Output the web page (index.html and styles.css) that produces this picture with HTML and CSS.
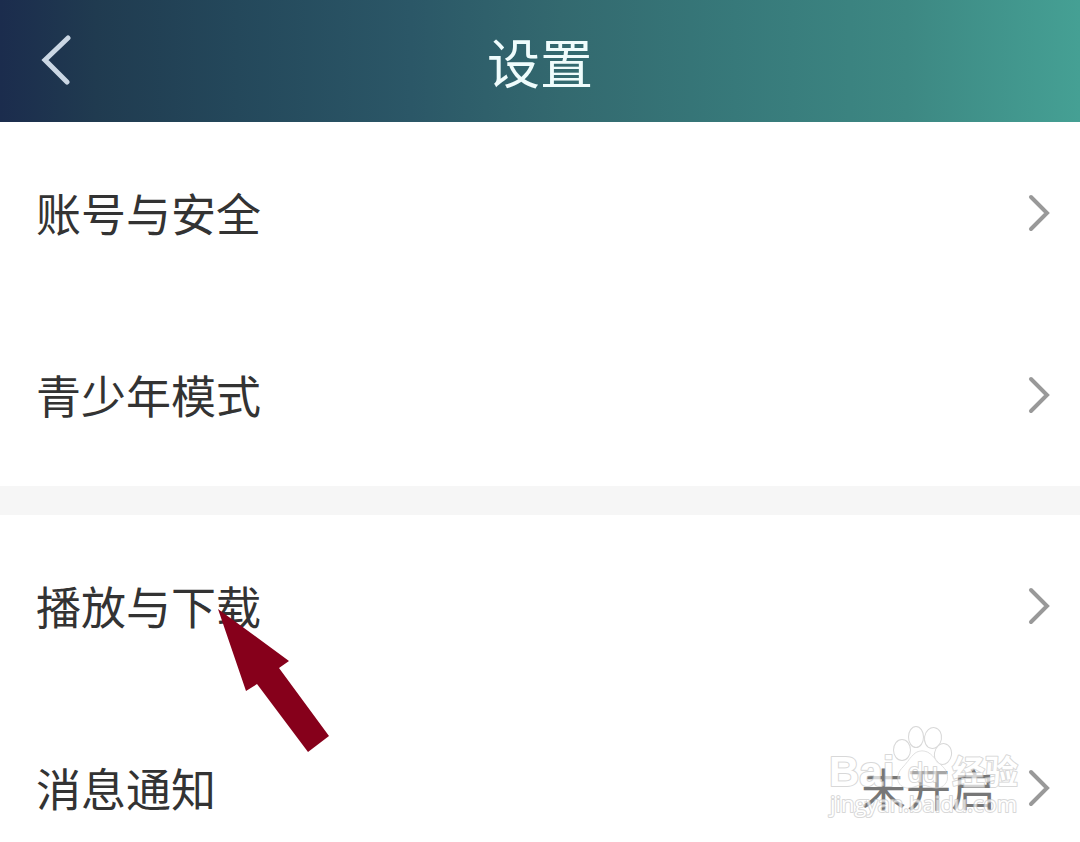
FILE: index.html
```html
<!DOCTYPE html>
<html lang="zh-CN">
<head>
    <meta charset="utf-8">
    <meta name="viewport" content="width=device-width, initial-scale=1">
    <title>设置</title>
    <link rel="stylesheet" href="styles.css">
</head>
<body>
    <header class="header">
        <button class="back-btn" type="button" aria-label="返回">
            <svg width="32" height="52" viewBox="0 0 32 52"><path d="M28 3L5 25L27 47"/></svg>
        </button>
        <h1 class="title">设置</h1>
    </header>
    <main class="settings">
        <nav class="group">
            <a class="row" href="#account">
                <span class="row-label">账号与安全</span>
                <svg class="chevron" width="24" height="38" viewBox="0 0 24 38"><path d="M3 3L19 19L3 35"/></svg>
            </a>
            <a class="row" href="#teen">
                <span class="row-label">青少年模式</span>
                <svg class="chevron" width="24" height="38" viewBox="0 0 24 38"><path d="M3 3L19 19L3 35"/></svg>
            </a>
        </nav>
        <nav class="group">
            <a class="row" href="#playback">
                <span class="row-label">播放与下载</span>
                <svg class="chevron" width="24" height="38" viewBox="0 0 24 38"><path d="M3 3L19 19L3 35"/></svg>
                <svg class="pointer" width="112" height="144" viewBox="0 0 112 144"><path d="M0 0L71 52L61 59L111 127L90 143L39 75L28 82Z"/></svg>
            </a>
            <a class="row" href="#notice">
                <span class="row-label">消息通知</span>
                <span class="row-value">未开启</span>
                <svg class="chevron" width="24" height="38" viewBox="0 0 24 38"><path d="M3 3L19 19L3 35"/></svg>
                <svg class="watermark" width="200" height="100" viewBox="0 0 200 100">
                    <!-- paw -->
                    <ellipse cx="76" cy="30" rx="8" ry="10"/>
                    <ellipse cx="90" cy="17" rx="7" ry="10"/>
                    <ellipse cx="107" cy="18" rx="8" ry="10" transform="rotate(10 107 18)"/>
                    <ellipse cx="117" cy="34" rx="8" ry="10" transform="rotate(10 117 34)"/>
                    <path class="wm-pad" d="M96 31C105 31 108 39 115 45C126 54 122 68 110 68C104 68 102 65 96 65C90 65 88 68 82 68C70 67 69 55 77 47C84 40 87 31 96 31Z"/>
                    <text class="wm-brand" x="3" y="66">Bai</text>
                    <text class="wm-du" x="82" y="62">du</text>
                    <text class="wm-name" x="126" y="64">经验</text>
                    <text class="wm-url" x="4" y="92">jingyan.baidu.com</text>
                </svg>
            </a>
        </nav>
    </main>
</body>
</html>
```
FILE: styles.css
```css
* {
    box-sizing: border-box;
}
body {
    margin: 0;
    height: 100vh;
    overflow: hidden;
    display: flex;
    flex-direction: column;
    background: #fff;
    color: #333;
    font-family: "Noto Sans CJK SC", sans-serif;
}
.header {
    flex: none;
    display: grid;
    grid-template-columns: 80px 1fr 80px;
    align-items: center;
    height: 122px;
    padding: 0 16px;
    background: linear-gradient(90deg, #1b2c4d 0%, #203b50 9%, #24485b 22%, #2b5767 38%, #33696f 52%, #37797a 68%, #3d8883 84%, #45a094 100%);
}
.back-btn {
    justify-self: start;
    display: flex;
    padding: 0 24px;
    border: none;
    background: none;
    cursor: pointer;
}
.back-btn path {
    fill: none;
    stroke: #cbd7e4;
    stroke-width: 5;
    stroke-linecap: round;
}
.title {
    margin: 0;
    text-align: center;
    font-size: 53px;
    line-height: 80px;
    font-weight: 400;
    color: #effcfc;
}
.settings {
    flex: 1;
    min-height: 0;
    overflow: hidden;
}
.group + .group {
    border-top: 29px solid #f6f6f6;
}
.row {
    position: relative;
    display: flex;
    align-items: center;
    height: 182px;
    padding: 0 28px 0 36px;
    color: inherit;
    text-decoration: none;
}
.row-label {
    flex: 1;
    font-size: 45px;
    line-height: 64px;
}
.row-value {
    margin-right: 32px;
    font-size: 45px;
    line-height: 64px;
    color: #777;
}
.chevron path {
    fill: none;
    stroke: #999;
    stroke-width: 4;
    stroke-linecap: round;
}
.pointer {
    position: absolute;
    left: 218px;
    top: 94px;
    z-index: 1;
    fill: #86001b;
}
.watermark {
    position: absolute;
    right: 54px;
    top: 23px;
    fill: #fff;
    stroke: #c8c8c8;
    stroke-width: 2;
    stroke-linejoin: round;
    paint-order: stroke;
    opacity: 0.7;
    overflow: visible;
}
.wm-pad {
    fill: rgba(255, 255, 255, 0.5);
    stroke-width: 1;
}
.wm-brand {
    font: 700 42px "Liberation Sans", sans-serif;
}
.wm-du {
    font: 400 27px "Liberation Sans", sans-serif;
}
.wm-name {
    font: 700 33px "Noto Sans CJK SC", sans-serif;
}
.wm-url {
    font: 400 22px "Open Sans", sans-serif;
}
```
